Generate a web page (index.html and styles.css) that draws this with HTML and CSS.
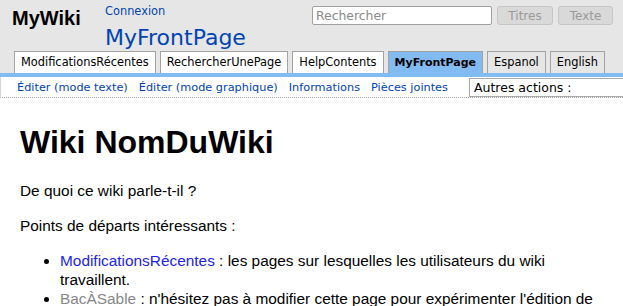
FILE: index.html
```html
<!DOCTYPE html>
<html lang="fr">
<head>
  <meta charset="UTF-8">
  <title>MyFrontPage - MyWiki</title>
  <link rel="stylesheet" href="styles.css">
</head>
<body>
  <div class="header">
    <div class="top">
      <div class="logo">MyWiki</div>
      <div class="title-box">
        <a class="login" href="#">Connexion</a>
        <h1 class="pagename"><a href="#">MyFrontPage</a></h1>
      </div>
      <form class="search">
        <input class="search-input" type="text" placeholder="Rechercher">
        <button class="search-btn" type="button" disabled>Titres</button>
        <button class="search-btn" type="button" disabled>Texte</button>
      </form>
    </div>
    <ul class="navibar">
      <li class="wikilink"><a href="#">ModificationsRécentes</a></li>
      <li class="wikilink"><a href="#">RechercherUnePage</a></li>
      <li class="wikilink"><a href="#">HelpContents</a></li>
      <li class="wikilink current"><a href="#">MyFrontPage</a></li>
      <li class="userlink"><a href="#">Espanol</a></li>
      <li class="userlink"><a href="#">English</a></li>
    </ul>
  </div>

  <div class="editbar">
    <a href="#">Éditer (mode texte)</a>
    <a href="#">Éditer (mode graphique)</a>
    <a href="#">Informations</a>
    <a href="#">Pièces jointes</a>
    <div class="actions">Autres actions :</div>
  </div>

  <div class="content">
    <h1>Wiki NomDuWiki</h1>
    <p>De quoi ce wiki parle-t-il ?</p>
    <p>Points de départs intéressants :</p>
    <ul>
      <li><a href="#">ModificationsRécentes</a> : les pages sur lesquelles les utilisateurs du wiki travaillent.</li>
      <li><a class="nonexistent" href="#">BacÀSable</a> : n'hésitez pas à modifier cette page pour expérimenter l'édition de pages.</li>
    </ul>
  </div>
</body>
</html>
```

FILE: styles.css
```css
* {
  box-sizing: border-box;
}

body {
  margin: 0;
  background: #ffffff;
  color: #000000;
  font-family: 'Liberation Sans', Arial, sans-serif;
  overflow: hidden;
}

a {
  text-decoration: none;
}

/* Header */
.header {
  background: #e6e6e6;
  border-bottom: 4px solid #81bbf2;
}

.top {
  display: flex;
  align-items: flex-start;
  height: 51px;
  padding: 0 10px 0 12px;
}

.logo {
  margin-top: 6px;
  font-size: 20px;
  font-weight: bold;
  line-height: 24px;
  width: 69px;
}

.title-box {
  display: flex;
  flex-direction: column;
  margin-left: 24px;
  font-family: 'DejaVu Sans', sans-serif;
}

.login {
  margin-top: 4px;
  font-size: 11.4px;
  line-height: 14px;
  color: #0044b3;
}

.pagename {
  margin: 7px 0 0;
  font-size: 22px;
  font-weight: normal;
  line-height: 26px;
  white-space: nowrap;
}

.pagename a {
  color: #0044b3;
}

.search {
  display: flex;
  gap: 5px;
  margin: 6px 0 0 auto;
}

.search-input {
  width: 180px;
  height: 19px;
  margin: 0;
  padding: 0 3px;
  border: 1px solid #a0a0a0;
  border-radius: 2px;
  background: #ffffff;
  font-family: 'DejaVu Sans', sans-serif;
  font-size: 12.4px;
}

.search-input::placeholder {
  color: #8a8a8a;
}

.search-btn {
  width: 56px;
  height: 19px;
  margin: 0;
  padding: 0;
  border: 1px solid #c6c6c6;
  border-radius: 3px;
  background: #d9d9d9;
  color: #999999;
  font-family: 'DejaVu Sans', sans-serif;
  font-size: 12px;
}

.search-btn + .search-btn {
  width: 55px;
}

/* Tabs */
.navibar {
  display: flex;
  gap: 4px;
  margin: 0;
  padding: 0 0 0 14px;
  list-style: none;
  font-family: 'DejaVu Sans', sans-serif;
  font-size: 11.4px;
}

.navibar li {
  height: 22px;
  border: 1px solid #a3a3a3;
  border-bottom: none;
  background: #ffffff;
}

.navibar li a {
  display: block;
  padding: 0 6px;
  line-height: 21px;
  color: #000000;
  white-space: nowrap;
}

.navibar li.current {
  background: #81bbf2;
  font-size: 11px;
  font-weight: bold;
}

.navibar li.userlink {
  background: #e6e6e6;
}

/* Edit bar */
.editbar {
  display: flex;
  align-items: flex-start;
  gap: 11px;
  height: 21px;
  padding: 2px 0 0 16px;
  border-bottom: 1px dotted #a0a0a0;
  border-left: 1px solid #d6d6d6;
  overflow: hidden;
  font-family: 'DejaVu Sans', sans-serif;
  font-size: 11.3px;
  line-height: 18px;
  white-space: nowrap;
}

.editbar a {
  color: #0044b3;
}

.actions {
  flex: 1 0 auto;
  height: 19px;
  margin: -1px -20px 0 10px;
  padding: 0 4px;
  border: 1px solid #a8a8a8;
  background: #ffffff;
  color: #000000;
  font-size: 12.5px;
  line-height: 17px;
}

/* Page content */
.content {
  padding: 0 15px 0 20px;
  font-size: 15.4px;
  line-height: 1.25;
}

.content h1 {
  margin: 25px 0 20px;
  font-size: 32px;
  line-height: 1.2;
}

.content p {
  margin: 15.4px 0;
}

.content ul {
  margin: 15.4px 0;
  padding-left: 40px;
}

.content a {
  color: #2323ee;
}

.content a.nonexistent {
  color: #888888;
}
```
